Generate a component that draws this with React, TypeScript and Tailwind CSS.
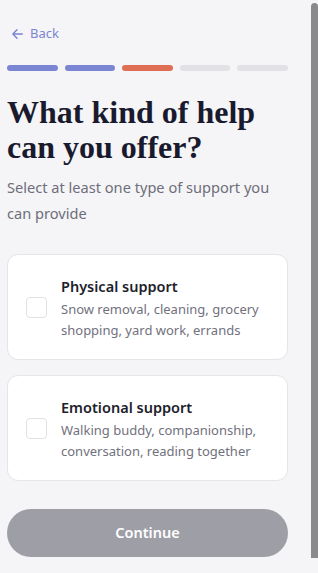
import React from "react";

const sans = { fontFamily: '"Noto Sans", "Open Sans", sans-serif' };
const serif = { fontFamily: '"Liberation Serif", "DejaVu Serif", serif' };

function Option({ title, desc }: { title: string; desc: string }) {
  return (
    <div className="flex items-center gap-[14px] rounded-[11px] border border-[#e4e4e9] bg-white pl-[18px] pr-3 h-[106px]">
      <div className="w-[21px] h-[21px] shrink-0 rounded-[4px] border border-[#e2e2e6] bg-white" />
      <div className="flex flex-col pt-[2px]">
        <div className="text-[14.5px] font-semibold text-[#1e1e2c] leading-[22px]">{title}</div>
        <div className="text-[13px] text-[#71717d] leading-[21px] mt-[2px]">{desc}</div>
      </div>
    </div>
  );
}

export default function App() {
  return (
    <div className="relative w-[318px] h-[573px] overflow-hidden bg-[#f5f5f7]" style={sans}>
      <div className="w-[311px] pl-[7px] pr-[23px] flex flex-col">
        <div className="flex items-center gap-[7px] pt-[24px] h-[43px] pl-[5px] text-[#7b84d4]">
          <svg width="11" height="12" viewBox="0 0 11 12" fill="none" stroke="#7b84d4" strokeWidth="1.4" strokeLinecap="round" strokeLinejoin="round">
            <path d="M10.3 6H1M5 1.8L0.9 6l4.1 4.2" />
          </svg>
          <span className="text-[13px]">Back</span>
        </div>
        <div className="flex gap-[7px] mt-[22px]">
          <div className="h-[6px] flex-1 rounded-full bg-[#7a86d4]" />
          <div className="h-[6px] flex-1 rounded-full bg-[#7a86d4]" />
          <div className="h-[6px] flex-1 rounded-full bg-[#de6f55]" />
          <div className="h-[6px] flex-1 rounded-full bg-[#e2e2e6]" />
          <div className="h-[6px] flex-1 rounded-full bg-[#e2e2e6]" />
        </div>
        <h1 className="mt-[24px] text-[32px] font-bold leading-[35px] text-[#1a1a2e]" style={serif}>
          What kind of help can you offer?
        </h1>
        <p className="mt-[9px] text-[14.6px] leading-[26px] text-[#6e6e7a]">
          Select at least one type of support you can provide
        </p>
        <div className="mt-[28px] flex flex-col gap-[15px]">
          <Option title="Physical support" desc="Snow removal, cleaning, grocery shopping, yard work, errands" />
          <Option title="Emotional support" desc="Walking buddy, companionship, conversation, reading together" />
        </div>
        <button className="mt-[28px] h-[48px] rounded-full bg-[#9d9ea6] text-white text-[14.5px] font-semibold">
          Continue
        </button>
      </div>
      <div className="absolute right-0 top-[3px] w-[7px] h-[555px] rounded-t-[4px] bg-[#8a8a8c]" />
    </div>
  );
}
